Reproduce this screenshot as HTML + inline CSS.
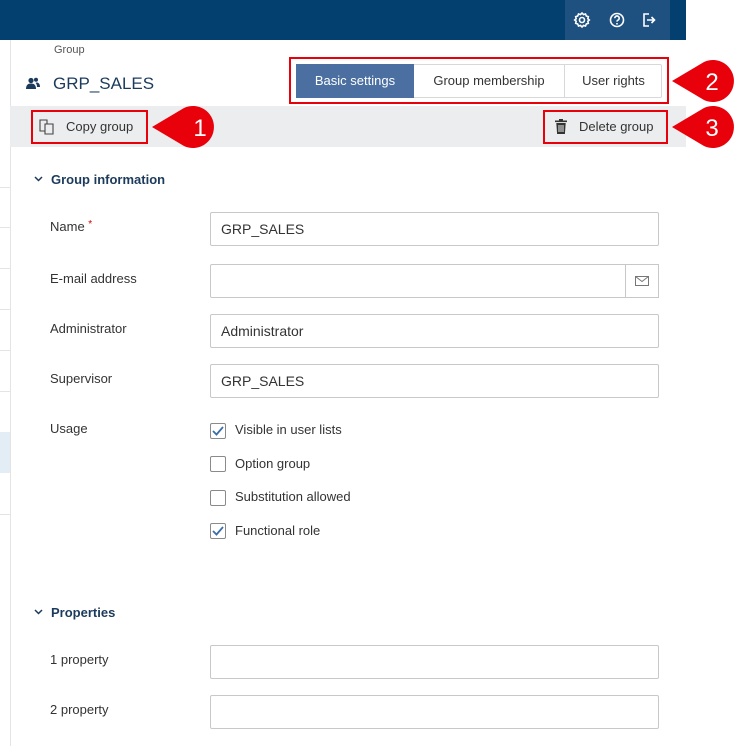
<!DOCTYPE html>
<html><head><meta charset="utf-8"><style>
*{box-sizing:border-box;margin:0;padding:0}
body{width:737px;height:746px;position:relative;background:#fff;font-family:"Liberation Sans",sans-serif;color:#333;overflow:hidden;font-size:13px}
.a{position:absolute}
.inp{position:absolute;left:210px;width:449px;height:34px;border:1px solid #c8c8c8;border-radius:2px;padding:0 10px;line-height:32px;font-size:14px;color:#333}
.lbl{position:absolute;left:50px;font-size:13px;color:#333}
.cb{position:absolute;left:210px;width:16px;height:16px;border:1px solid #8a8a8a;border-radius:2px}
.cbl{position:absolute;left:235px;font-size:13px}
.hline{position:absolute;left:0;width:10px;height:1px;background:#e4e4e4}
.red{position:absolute;border:2.5px solid #e8000b}
</style></head><body>
<div class="a" style="left:0;top:0;width:686px;height:40px;background:#03406f"></div>
<div class="a" style="left:565px;top:0;width:105px;height:40px;background:#1e5180"></div>
<svg class="a" style="left:572px;top:10px" width="90" height="20" viewBox="0 0 90 20">
<g fill="none" stroke="#fff" stroke-width="1.6">
<circle cx="10" cy="10" r="2.5"/>
<path d="M10 3l1.5 1.6 2-.6.8 2 2 .7-.5 2 1.5 1.3-1.5 1.3.5 2-2 .7-.8 2-2-.6L10 17l-1.5-1.6-2 .6-.8-2-2-.7.5-2L2.7 10l1.5-1.3-.5-2 2-.7.8-2 2 .6z"/>
<circle cx="45" cy="10" r="6.5"/>
<path d="M42.8 8.2a2.2 2.2 0 1 1 3 2c-.6.3-.8.7-.8 1.4"/>
<path d="M77 4h-5v12h5"/><path d="M75 10h7M79.5 7l3 3-3 3"/>
</g><circle cx="45" cy="13.8" r=".9" fill="#fff"/></svg>
<div class="a" style="left:10px;top:40px;width:1px;height:706px;background:#e4e4e4"></div>
<div class="hline" style="top:187px"></div><div class="hline" style="top:227px"></div><div class="hline" style="top:268px"></div><div class="hline" style="top:309px"></div><div class="hline" style="top:350px"></div><div class="hline" style="top:391px"></div>
<div class="a" style="left:0;top:432px;width:10px;height:41px;background:#e3edf5"></div>
<div class="hline" style="top:514px"></div>
<div class="a" style="left:54px;top:44px;font-size:11px;color:#555">Group</div>
<svg class="a" style="left:26px;top:77px" width="14" height="13" viewBox="0 0 14 13"><g fill="#1b3a5c"><circle cx="5" cy="3.5" r="2.6"/><path d="M0 12c0-4 2-5.5 5-5.5s5 1.5 5 5.5z"/><circle cx="10" cy="2.8" r="2"/><path d="M10.5 5.5c2 0 3.5 1.3 3.5 4.5h-3c0-2-.5-3.3-1.5-4z"/></g></svg>
<div class="a" style="left:53px;top:74px;font-size:17px;color:#1b3a5c">GRP_SALES</div>
<div class="a" style="left:296px;top:64px;width:366px;height:34px;border:1px solid #d8d8d8;border-radius:2px"></div>
<div class="a" style="left:296px;top:64px;width:118px;height:34px;background:#4a6fa0;color:#fff;font-size:13px;line-height:34px;text-align:center">Basic settings</div>
<div class="a" style="left:414px;top:64px;width:151px;height:34px;line-height:34px;text-align:center;border-right:1px solid #d8d8d8">Group membership</div>
<div class="a" style="left:565px;top:64px;width:97px;height:34px;line-height:34px;text-align:center">User rights</div>
<div class="red" style="left:289px;top:57px;width:380px;height:47px"></div>
<div class="a" style="left:10px;top:106px;width:676px;height:41px;background:#ecedee"></div>
<svg class="a" style="left:39px;top:119px" width="16" height="16" viewBox="0 0 16 16"><g fill="none" stroke="#444" stroke-width="1.1"><path d="M1 1h7v11H1z"/><path d="M6 5h8v10H6z" fill="#ecedee"/></g></svg>
<div class="a" style="left:66px;top:119px">Copy group</div>
<div class="red" style="left:31px;top:110px;width:117px;height:34px"></div>
<svg class="a" style="left:555px;top:119px" width="12" height="15" viewBox="0 0 12 15"><g fill="#333"><rect x="0" y="1.5" width="12" height="1.6"/><rect x="4" y="0" width="4" height="2"/><path d="M1.3 4h9.4l-.8 11H2.1z"/></g><g stroke="#ecedee" stroke-width="1"><path d="M4 6v7M6 6v7M8 6v7"/></g></svg>
<div class="a" style="left:579px;top:119px">Delete group</div>
<div class="red" style="left:543px;top:110px;width:125px;height:34px"></div>
<svg class="a" style="left:150px;top:104px" width="74" height="46" viewBox="0 0 74 46"><path d="M2 23 L34 4 A21 21 0 1 1 34 42 Z" fill="#e8000b"/><text x="50" y="32" fill="#fff" font-size="24" font-family="Liberation Sans" text-anchor="middle">1</text></svg>
<svg class="a" style="left:670px;top:58px" width="67" height="46" viewBox="0 0 67 46"><path d="M2 23 L34 4 A21 21 0 1 1 34 42 Z" fill="#e8000b"/><text x="42" y="32" fill="#fff" font-size="24" font-family="Liberation Sans" text-anchor="middle">2</text></svg>
<svg class="a" style="left:670px;top:104px" width="67" height="46" viewBox="0 0 67 46"><path d="M2 23 L34 4 A21 21 0 1 1 34 42 Z" fill="#e8000b"/><text x="42" y="32" fill="#fff" font-size="24" font-family="Liberation Sans" text-anchor="middle">3</text></svg>
<svg class="a" style="left:34px;top:176px" width="9" height="6" viewBox="0 0 9 6"><path d="M1 1l3.5 3.5L8 1" fill="none" stroke="#1b3a5c" stroke-width="1.5"/></svg>
<div class="a" style="left:51px;top:172px;font-weight:bold;color:#1b3a5c">Group information</div>
<div class="lbl" style="top:219px">Name <span style="color:#c00;font-size:10px;vertical-align:top">*</span></div>
<div class="inp" style="top:212px">GRP_SALES</div>
<div class="lbl" style="top:271px">E-mail address</div>
<div class="inp" style="top:264px"></div>
<div class="a" style="left:625px;top:264px;width:34px;height:34px;border:1px solid #c8c8c8;background:#fff"></div>
<svg class="a" style="left:635px;top:276px" width="14" height="10" viewBox="0 0 14 10"><g fill="none" stroke="#777" stroke-width="1"><rect x=".5" y=".5" width="13" height="9"/><path d="M.5 .5l6.5 5 6.5-5"/></g></svg>
<div class="lbl" style="top:321px">Administrator</div>
<div class="inp" style="top:314px">Administrator</div>
<div class="lbl" style="top:371px">Supervisor</div>
<div class="inp" style="top:364px">GRP_SALES</div>
<div class="lbl" style="top:421px">Usage</div>
<div class="cb" style="top:423px"><svg width="14" height="14" viewBox="0 0 14 14"><path d="M2 7l3.5 3.5L12 3" fill="none" stroke="#3d6ea8" stroke-width="1.8"/></svg></div>
<div class="cbl" style="top:422px">Visible in user lists</div>
<div class="cb" style="top:456px"></div><div class="cbl" style="top:456px">Option group</div>
<div class="cb" style="top:490px"></div><div class="cbl" style="top:489px">Substitution allowed</div>
<div class="cb" style="top:523px"><svg width="14" height="14" viewBox="0 0 14 14"><path d="M2 7l3.5 3.5L12 3" fill="none" stroke="#3d6ea8" stroke-width="1.8"/></svg></div>
<div class="cbl" style="top:523px">Functional role</div>
<svg class="a" style="left:34px;top:609px" width="9" height="6" viewBox="0 0 9 6"><path d="M1 1l3.5 3.5L8 1" fill="none" stroke="#1b3a5c" stroke-width="1.5"/></svg>
<div class="a" style="left:51px;top:605px;font-weight:bold;color:#1b3a5c">Properties</div>
<div class="lbl" style="top:652px">1 property</div>
<div class="inp" style="top:645px"></div>
<div class="lbl" style="top:702px">2 property</div>
<div class="inp" style="top:695px"></div>
</body></html>
